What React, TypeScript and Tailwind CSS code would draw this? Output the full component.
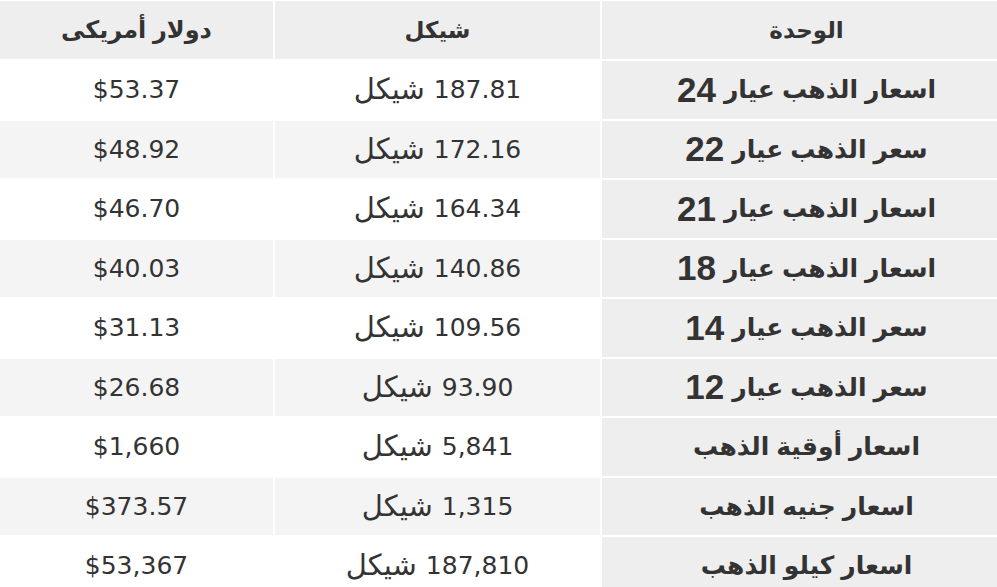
import React from "react";

type Fila = { unidad: string; karat?: string; shekel: string; dolar: string };

const FILAS: Fila[] = [
  { unidad: "اسعار الذهب عيار", karat: "24", shekel: "187.81", dolar: "$53.37" },
  { unidad: "سعر الذهب عيار", karat: "22", shekel: "172.16", dolar: "$48.92" },
  { unidad: "اسعار الذهب عيار", karat: "21", shekel: "164.34", dolar: "$46.70" },
  { unidad: "اسعار الذهب عيار", karat: "18", shekel: "140.86", dolar: "$40.03" },
  { unidad: "سعر الذهب عيار", karat: "14", shekel: "109.56", dolar: "$31.13" },
  { unidad: "سعر الذهب عيار", karat: "12", shekel: "93.90", dolar: "$26.68" },
  { unidad: "اسعار أوقية الذهب", shekel: "5,841", dolar: "$1,660" },
  { unidad: "اسعار جنيه الذهب", shekel: "1,315", dolar: "$373.57" },
  { unidad: "اسعار كيلو الذهب", shekel: "187,810", dolar: "$53,367" },
];

const HEAD = "h-[58px] flex items-center justify-center bg-[#eeeeee] font-bold text-[23px]";
const BOLD = "font-['Liberation_Sans','DejaVu_Sans',sans-serif]";
const CELL = "h-[57.5px] flex items-center justify-center text-[25px] font-['DejaVu_Sans',sans-serif]";

export default function App() {
  return (
    <div dir="rtl" className="bg-white pt-[1px] text-[#333333]">
      <div className="grid grid-cols-[395px_325px_273px] gap-[2px]">
        <div className={`${HEAD} ${BOLD} pl-[14px]`}>الوحدة</div>
        <div className={`${HEAD} ${BOLD}`}>شيكل</div>
        <div className={`${HEAD} ${BOLD} text-[24px]`}>دولار أمريكى</div>

        {FILAS.map((f, i) => {
          const zebra = i % 2 === 1 ? "bg-[#f4f4f4]" : "bg-white";
          return (
            <React.Fragment key={f.unidad + i}>
              <div className={`h-[57.5px] flex items-center justify-center gap-[8px] pl-[14px] bg-[#eeeeee] font-bold text-[25px] ${BOLD}`}>
                <span>{f.unidad}</span>
                {f.karat && <span className="text-[35px]">{f.karat}</span>}
              </div>
              <div className={`${CELL} ${zebra} gap-[9px]`}>
                <span>{f.shekel}</span>
                <span className="text-[29px]">شيكل</span>
              </div>
              <div className={`${CELL} ${zebra} text-[24px]`}>{f.dolar}</div>
            </React.Fragment>
          );
        })}
      </div>
    </div>
  );
}
